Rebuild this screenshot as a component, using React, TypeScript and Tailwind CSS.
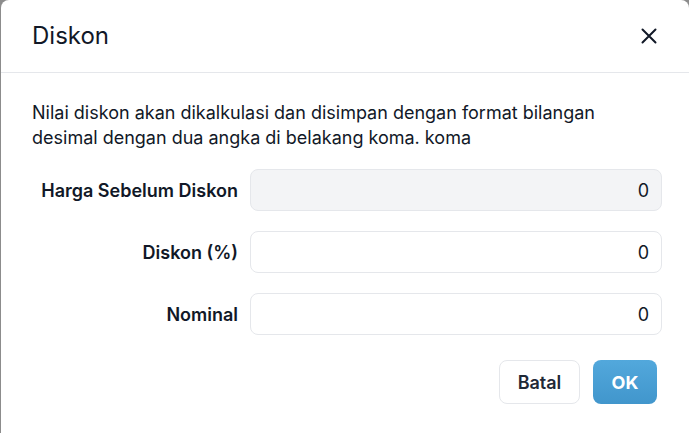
import React from 'react';

const fields = [
  { label: 'Harga Sebelum Diskon', value: '0', disabled: true },
  { label: 'Diskon (%)', value: '0', disabled: false },
  { label: 'Nominal', value: '0', disabled: false },
];

export default function App() {
  return (
    <div className="h-[433px] w-[689px] bg-[#8c8c8c] pl-px overflow-hidden" style={{ fontFamily: 'Inter, "Noto Sans", sans-serif' }}>
      <div className="h-[440px] bg-white rounded-t-lg rounded-b-lg flex flex-col">
        <div className="h-[73px] flex items-center justify-between pl-[31px] pr-[30px] border-b border-[#e5e7eb]">
          <h2 className="text-[24px] text-[#111827] font-normal">Diskon</h2>
          <button className="text-[#111827]">
            <svg width="20" height="20" viewBox="0 0 20 20" fill="none" stroke="currentColor" strokeWidth="2" strokeLinecap="round">
              <path d="M3.5 3.5l13 13M16.5 3.5l-13 13" />
            </svg>
          </button>
        </div>
        <div className="pl-[31px] pr-[26px] pt-[27px]">
          <p className="text-[18px] leading-[25px] text-[#111827]">
            Nilai diskon akan dikalkulasi dan disimpan dengan format bilangan<br />
            desimal dengan dua angka di belakang koma. koma
          </p>
          <div className="mt-[19px] flex flex-col gap-5">
            {fields.map((f) => (
              <div key={f.label} className="flex items-center gap-3">
                <label className="w-[206px] text-right text-[18px] font-semibold text-[#111827] whitespace-nowrap">{f.label}</label>
                <input
                  readOnly
                  value={f.value}
                  disabled={f.disabled}
                  className={`h-[42px] w-[412px] rounded-lg border border-[#e5e7eb] px-3 text-right text-[18px] text-[#111827] outline-none ${f.disabled ? 'bg-[#f3f4f6]' : 'bg-white'}`}
                />
              </div>
            ))}
          </div>
          <div className="mt-[25px] flex justify-end gap-[13px] pr-[6px]">
            <button className="h-[44px] w-[81px] rounded-lg border border-[#e5e7eb] bg-white text-[18px] font-semibold text-[#1f2937]">Batal</button>
            <button className="h-[44px] w-[64px] rounded-lg bg-gradient-to-b from-[#52a8dc] to-[#4196cc] text-[18px] font-bold text-white">OK</button>
          </div>
        </div>
      </div>
    </div>
  );
}
